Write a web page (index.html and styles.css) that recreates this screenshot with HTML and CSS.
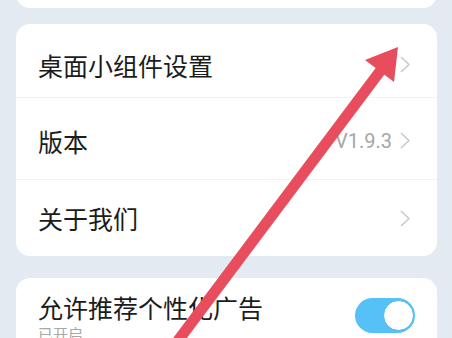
FILE: index.html
```html
<!DOCTYPE html>
<html lang="zh-CN">
<head>
<meta charset="utf-8">
<title>设置</title>
<link rel="stylesheet" href="styles.css">
</head>
<body>
<div class="page">
  <div class="card card-top"></div>
  <div class="card">
    <div class="row row-a">
      <span class="label">桌面小组件设置</span>
      <span class="chev"><svg width="11" height="17" viewBox="0 0 11 17"><path d="M1.5 1.5 L9 8.5 L1.5 15.5" fill="none" stroke="#cbcbcb" stroke-width="1.7" stroke-linecap="round" stroke-linejoin="round"/></svg></span>
    </div>
    <div class="row row-b">
      <span class="label">版本</span>
      <span class="value">V1.9.3</span>
      <span class="chev"><svg width="11" height="17" viewBox="0 0 11 17"><path d="M1.5 1.5 L9 8.5 L1.5 15.5" fill="none" stroke="#cbcbcb" stroke-width="1.7" stroke-linecap="round" stroke-linejoin="round"/></svg></span>
    </div>
    <div class="row row-c">
      <span class="label">关于我们</span>
      <span class="chev"><svg width="11" height="17" viewBox="0 0 11 17"><path d="M1.5 1.5 L9 8.5 L1.5 15.5" fill="none" stroke="#cbcbcb" stroke-width="1.7" stroke-linecap="round" stroke-linejoin="round"/></svg></span>
    </div>
  </div>
  <div class="card card-ad">
    <div class="ad-row">
      <div class="ad-text">
        <div class="label">允许推荐个性化广告</div>
        <div class="sub">已开启</div>
      </div>
      <div class="toggle"><div class="knob"></div></div>
    </div>
  </div>
</div>
<svg class="arrow" width="452" height="338" viewBox="0 0 452 338">
  <line x1="174" y1="346" x2="384" y2="66" stroke="#e84d5d" stroke-width="11"/>
  <polygon points="398,47 365,60 394,82" fill="#e84d5d"/>
</svg>
</body>
</html>
```
FILE: styles.css
```css
html, body {
  margin: 0;
  padding: 0;
}
body {
  width: 452px;
  height: 338px;
  overflow: hidden;
  background: #e3eaf2;
  font-family: "Noto Sans CJK SC", "Noto Sans", sans-serif;
  color: #1c1c1c;
  position: relative;
}
.page {
  padding: 0 15px 0 16px;
  display: flex;
  flex-direction: column;
}
.card {
  background: #fff;
  border-radius: 14px;
}
.card-top {
  height: 30px;
  margin-top: -22px;
  margin-bottom: 16px;
}
.row {
  display: flex;
  align-items: center;
  padding: 0 26px 0 22px;
  border-bottom: 1px solid #f1f2f3;
  box-sizing: border-box;
}
.row-a { height: 74px; padding-top: 8px; }
.row-b { height: 82px; padding-top: 4px; }
.row-c { height: 76px; border-bottom: none; }
.label {
  font-size: 25px;
  line-height: 30px;
  flex: 1;
}
.value {
  font-family: Roboto, "Liberation Sans", sans-serif;
  font-size: 20px;
  color: #a6a6a6;
  margin-right: 8px;
}
.chev {
  display: flex;
  width: 11px;
  height: 17px;
}
.card-ad {
  margin-top: 22px;
  height: 80px;
}
.ad-row {
  display: flex;
  align-items: flex-start;
  padding: 14px 22px 0 22px;
}
.ad-text { flex: 1; }
.sub {
  font-size: 15px;
  color: #a8a8a8;
  line-height: 20px;
  margin-top: 2px;
}
.toggle {
  width: 60px;
  height: 35px;
  border-radius: 18px;
  background: #55c1f7;
  margin-top: 6px;
  display: flex;
  align-items: center;
  justify-content: flex-end;
  padding: 0 1px;
  box-sizing: border-box;
}
.knob {
  width: 31px;
  height: 31px;
  border-radius: 50%;
  background: #fff;
  border: 1.5px solid #4db6ee;
  box-sizing: border-box;
}
.arrow {
  position: absolute;
  top: 0;
  left: 0;
  pointer-events: none;
}
```
